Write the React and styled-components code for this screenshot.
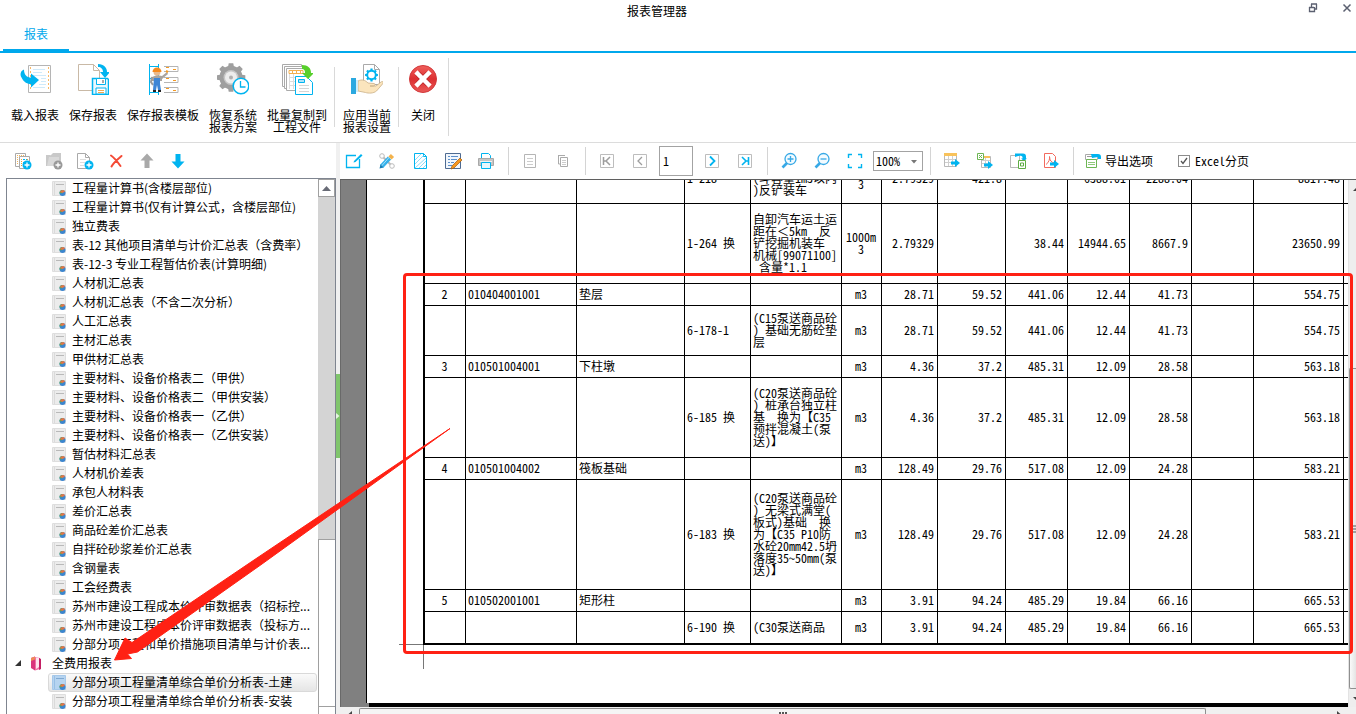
import React from "react";
import styled, { createGlobalStyle } from "styled-components";

const BLUE = "#00a8ec";
const CYAN = "#00b4f0";
const GRAY = "#a9a9a9";

const GlobalStyle = createGlobalStyle`
  *, *::before, *::after { box-sizing: border-box; }
  html, body, #root { height: 100%; margin: 0; }
  body {
    background: #fff;
    color: #000;
    font-family: "Noto Sans CJK SC", sans-serif;
    font-size: 12px;
    line-height: 12px;
    overflow: hidden;
  }
  button, input, select { font: inherit; color: inherit; }
  button { background: none; border: 0; padding: 0; margin: 0; }
  svg { display: block; flex: none; }
`;

const Window = styled.div`
  position: relative;
  display: flex;
  flex-direction: column;
  height: 100vh;
  overflow: hidden;
`;

/* ---------- title bar and tab ---------- */
const TitleBar = styled.header`
  display: flex;
  align-items: flex-start;
  height: 24px;
`;
const Title = styled.h1`
  flex: 1;
  margin: 0;
  padding: 4px 0 0 6px;
  font-size: 12px;
  font-weight: 400;
  line-height: 14px;
  text-align: center;
`;
const WindowControls = styled.div`
  display: flex;
  gap: 24px;
  padding: 3px 4px 0 0;
`;
const TabStrip = styled.nav`
  display: flex;
  height: 29px;
  padding-left: 3px;
  border-bottom: 2px solid ${BLUE};
`;
const Tab = styled.button`
  width: 66px;
  padding-bottom: 6px;
  color: ${BLUE};
  border-bottom: 2px solid ${BLUE};
`;

/* ---------- ribbon ---------- */
const Ribbon = styled.section`
  display: flex;
  flex: none;
  height: 90px;
  border-bottom: 1px solid #dcdcdc;
`;
const RibbonGroup = styled.div`
  display: flex;
  gap: 10px;
  padding: 10px ${(p) => p.$right}px 0 ${(p) => p.$left}px;
`;
const RibbonDivider = styled.div`
  width: 1px;
  margin: ${(p) => (p.$tall ? "5px 0 6px" : "14px 0 15px")};
  background: #d9d9d9;
`;
const RibbonButton = styled.button`
  display: flex;
  flex-direction: column;
  align-items: center;
  gap: 14px;
  height: 72px;
  white-space: pre;
  text-align: center;
`;

/* ---------- work area ---------- */
const WorkArea = styled.main`
  display: flex;
  flex: 1;
  min-height: 0;
`;
const Sidebar = styled.aside`
  display: flex;
  flex-direction: column;
  flex: none;
  width: 336px;
  padding-left: 6px;
`;
const SideTools = styled.div`
  display: flex;
  flex: none;
  align-items: center;
  gap: 9px;
  height: 35px;
  padding-left: 6px;
`;
const ToolButton = styled.button`
  display: flex;
  align-items: center;
  justify-content: center;
  flex: none;
  gap: 3px;
  min-width: 22px;
  height: 22px;
`;
const TreeBox = styled.div`
  display: flex;
  flex: 1;
  min-height: 0;
  border: 1px solid #7f8590;
  border-bottom: 0;
  overflow: hidden;
`;
const Tree = styled.ul`
  flex: 1;
  margin: 0;
  padding: 0;
  list-style: none;
  overflow: hidden;
`;
const TreeRow = styled.li`
  display: flex;
  align-items: center;
  gap: ${(p) => (p.$branch ? 9 : 5)}px;
  height: 19px;
  margin: 0 1px 0 ${(p) => (p.$branch ? 7 : 41)}px;
  padding: 0 0 1px ${(p) => (p.$branch ? 0 : 3)}px;
  border: 1px solid ${(p) => (p.$selected ? "#d9d9d9" : "transparent")};
  border-radius: 3px;
  background: ${(p) => (p.$selected ? "linear-gradient(#fafafa, #e5e5e5)" : "none")};
  line-height: 16px;
  white-space: nowrap;
`;
const TreeScroll = styled.div`
  display: flex;
  flex-direction: column;
  flex: none;
  width: 17px;
  background: #d4d4d4;
`;
const TreeScrollButton = styled.button`
  display: flex;
  flex: none;
  align-items: center;
  justify-content: center;
  height: 18px;
  background: #fff;
  border: 1px solid #a0a0a0;
`;
const TreeThumb = styled.div`
  height: 168px;
  margin-top: auto;
  background: #fff;
  border: 1px solid #a0a0a0;
  border-right: 0;
`;
const TreeScrollEnd = styled.div`
  height: 7px;
  background: #fff;
  border-left: 1px solid #a0a0a0;
`;
const Splitter = styled.div`
  display: flex;
  flex: none;
  align-items: center;
  width: 4px;
  padding-bottom: 25px;
  background: #f0f0f0;
`;
const SplitterHandle = styled.button`
  display: flex;
  align-items: center;
  width: 4px;
  height: 84px;
  background: #80c56c;
`;

/* ---------- report pane ---------- */
const ReportPane = styled.section`
  display: flex;
  flex-direction: column;
  flex: 1;
  min-width: 0;
`;
const ReportTools = styled.div`
  display: flex;
  flex: none;
  align-items: center;
  gap: 11px;
  height: 37px;
  padding-left: 3px;
  border-bottom: 1px solid #5f5f5f;
`;
const ToolDivider = styled.div`
  width: 1px;
  height: 28px;
  margin-right: -1px;
  background: #d4d4d4;
`;
const PageInput = styled.input`
  width: 34px;
  height: 30px;
  margin: 0 -3px;
  padding: 0 3px 2px;
  border: 1px solid #a3a3a3;
  border-radius: 0;
  background: #fff;
  outline: 0;
  font-feature-settings: "hwid";
`;
const ZoomBox = styled.label`
  position: relative;
  margin: 0 -4px;
`;
const ZoomSelect = styled.select`
  display: block;
  width: 50px;
  height: 20px;
  padding: 0 2px;
  appearance: none;
  border: 1px solid #a3a3a3;
  border-radius: 0;
  background: #fff;
  font-feature-settings: "hwid";
`;
const SelectArrow = styled.svg`
  position: absolute;
  right: 6px;
  top: 9px;
  pointer-events: none;
`;
const CheckLabel = styled.label`
  position: relative;
  display: flex;
  align-items: center;
  gap: 5px;
  margin-left: 14px;
  font-feature-settings: "hwid";
`;
const CheckBox = styled.input`
  appearance: none;
  width: 12px;
  height: 12px;
  margin: 0;
  border: 1px solid #8c8c8c;
  background: #fff;
`;
const CheckMark = styled.svg`
  position: absolute;
  left: 2px;
  pointer-events: none;
`;

const Viewer = styled.div`
  display: flex;
  flex: 1;
  min-height: 0;
`;
const Canvas = styled.div`
  display: flex;
  flex-direction: column;
  justify-content: flex-end;
  flex: 1;
  min-width: 0;
  padding-left: 25px;
  border-left: 1px solid #696969;
  background: #808080;
  overflow: hidden;
`;
const Paper = styled.div`
  flex: none;
  padding: 0 0 34px 32px;
  border-left: 1px solid #000;
  background: #fff;
`;
const PaperShadow = styled.div`
  flex: none;
  height: 4px;
  margin-left: 3px;
  background: #000;
`;
const PaperRow = styled.div`
  display: flex;
  align-items: flex-end;
`;
const SideMark = styled.div`
  flex: none;
  width: 24px;
  border-bottom: 1px solid #777;
`;
const DownMark = styled.div`
  height: 24px;
  margin-left: 24px;
  border-left: 1px solid #777;
`;
const ReportTable = styled.table`
  flex: 1;
  width: 100%;
  table-layout: fixed;
  border-spacing: 0;
  border: solid #000;
  border-width: 0 0 2px 2px;
  font-feature-settings: "hwid";
`;
const Row = styled.tr`
  height: ${(p) => p.$height}px;
`;
const Cell = styled.td`
  padding: 0 3px 2px 2px;
  border-top: 1px solid #000;
  border-left: 1px solid #000;
  text-align: ${(p) => p.$align};
  vertical-align: middle;
  white-space: pre;
  &:first-child { border-left: 0; }
`;
const WideMark = styled.span`
  font-feature-settings: normal;
`;

const VScroll = styled.div`
  display: flex;
  flex-direction: column;
  flex: none;
  width: 8px;
  background: #eeeeee;
  border-left: 1px solid #e3e3e3;
  overflow: hidden;
`;
const VThumb = styled.div`
  display: flex;
  align-items: center;
  justify-content: flex-end;
  flex: 1;
  margin-top: 170px;
  border: solid #8f8f8f;
  border-width: 1px 0 1px 1px;
  border-radius: 2px 0 0 2px;
  background: linear-gradient(90deg, #fafafa, #e4e4e4);
`;
const VScrollButton = styled.button`
  display: flex;
  align-items: center;
  justify-content: flex-end;
  flex: none;
  height: 18px;
`;
const HScroll = styled.div`
  display: flex;
  flex: none;
  height: 7px;
  padding: 1px 8px 0 0;
  background: #f0f0f0;
  overflow: hidden;
`;
const HScrollButton = styled.button`
  display: flex;
  flex: none;
  justify-content: center;
  width: 19px;
  padding-top: 3px;
`;
const HThumb = styled.div`
  display: flex;
  justify-content: center;
  flex: 1;
  padding-top: 3px;
  border: solid #8f8f8f;
  border-width: 1px 1px 0;
  border-radius: 2px 2px 0 0;
  background: #f5f5f5;
`;
const HTrack = styled.div`
  flex: none;
  width: 123px;
`;

/* ---------- annotation over the window ---------- */
const Highlight = styled.div`
  position: absolute;
  left: 403px;
  right: 3px;
  top: 273px;
  height: 381px;
  border: 3px solid #ff2114;
  border-radius: 4px;
  pointer-events: none;
`;
const Arrow = styled.svg`
  position: absolute;
  left: 110px;
  top: 420px;
  pointer-events: none;
`;

/* ---------- icons ---------- */
const Big = ({ children }) => (
  <svg width="32" height="32" viewBox="0 0 32 32" fill="none" aria-hidden="true">{children}</svg>
);
const Small = ({ children, size = 18 }) => (
  <svg width={size} height={size} viewBox="0 0 18 18" fill="none" aria-hidden="true">{children}</svg>
);

const gearPath = (cx, cy, r, R, n) => {
  const pts = [];
  for (let i = 0; i < n; i++) {
    const a = (i / n) * Math.PI * 2 - Math.PI / 2;
    const s = (Math.PI * 2) / n;
    [[-0.32, r], [-0.2, R], [0.2, R], [0.32, r]].forEach(([o, d]) =>
      pts.push(`${(cx + Math.cos(a + o * s) * d).toFixed(2)} ${(cy + Math.sin(a + o * s) * d).toFixed(2)}`)
    );
  }
  return `M${pts.join("L")}Z`;
};

const LoadIcon = () => (
  <Big>
    <path d="M9.500 2.500h22v27h-22z" fill="#fff" stroke="#b5b5b5" />
    <path d="M11.500 4v24M29.500 4v24" stroke="#f7b968" strokeDasharray="2 2" />
    <path d="M14 6.500h12M14 9.500h9M14 12.500h13M22 15.500h5M22 18.500h5M14 24.500h12M20 21.500h7" stroke="#cfeafa" />
    <path d="M5 6.500C1 8 1 12 2.500 14.500c2.500 5 6 6.500 9.500 6.500v3.500l8-7.500-8-6.500v4C8 14.500 5 12 5 6.500z" fill={CYAN} />
  </Big>
);
const SaveIcon = () => (
  <Big>
    <path d="M1.500 1.500h15l6 6v20h-21z" fill="#fff" stroke="#c9b9a6" />
    <path d="M16.500 1.500v6h6" stroke="#c9b9a6" />
    <path d="M21 1c6 0 9 4 9 8h3l-5 6-5-6h3c0-3-2-5-5-5z" fill={CYAN} />
    <path d="M15.500 15.500h15l1 1v15h-16z" fill="#e9f8ff" stroke={CYAN} strokeWidth="1.500" />
    <path d="M19.500 15.500h9v6h-9zM19 25h10v6H19z" fill="#fff" stroke={CYAN} />
    <path d="M25 17h2v3h-2z" fill={GRAY} />
    <path d="M21 27.500h6M21 29.500h6" stroke="#f3a950" />
  </Big>
);
const TemplateIcon = () => (
  <Big>
    <path d="M2.500 1v31M11.500 1v31M2 3.500h10M2 15.500h7M2 29.500h10" stroke={CYAN} />
    {[3.5, 14.5, 24.5].map((y) => (
      <g key={y}>
        <path d={`M17 ${y}h14v5h-14`} stroke="#b5b5b5" />
        <path d={`M19 ${y + 1}h3M26 ${y + 3}h3`} stroke="#f59a23" />
      </g>
    ))}
    <path d="M5 14l5-2 5 1 5-4 1 2-6 5v2H5z" fill="#a9a49f" />
    <path d="M5 14l-1 5 2 3" stroke="#9b9b9b" strokeWidth="2" />
    <circle cx="10" cy="9" r="3.500" fill="#e9b98d" />
    <path d="M5.500 9a4.500 4.500 0 0 1 9 0z" fill="#f58a1f" />
    <path d="M7 15h6v6l1 6h-3l-1-5-1 5H6z" fill="#3f86d6" />
    <path d="M6 28h3M11 28h3" stroke="#222" strokeWidth="2" />
    <path d="M19 8l2 1" stroke="#f59a23" strokeWidth="2" />
  </Big>
);
const RestoreIcon = () => (
  <Big>
    <path d={gearPath(14, 14.5, 11.5, 14.5, 8)} fill="#9f9f9f" />
    <circle cx="14" cy="14.500" r="11.500" fill="#9f9f9f" />
    <circle cx="14" cy="14.500" r="7.500" fill="#c7c7c7" />
    <circle cx="14" cy="14.500" r="6" fill="#ededed" />
    <circle cx="14" cy="14.500" r="2" fill="#b0b0b0" />
    <circle cx="24" cy="23" r="7.800" fill="#fff" stroke={CYAN} strokeWidth="1.500" />
    <path d="M23.500 18v6h5" stroke={CYAN} strokeWidth="1.300" />
  </Big>
);
const BatchIcon = () => (
  <Big>
    <path d="M1.500 1.500h19v22h-19z" fill="#fff" stroke="#aaa" />
    <path d="M3.500 3.500h19v22h-19z" fill="#fff" stroke="#aaa" />
    <path d="M5.500 5.500h19v22h-19z" fill="#fff" stroke="#aaa" />
    <path d="M8 7.500h14v3H8zM11.500 7.500v3M15.500 7.500v3M19.500 7.500v3" stroke="#f4b04f" />
    <path d="M8 14.500h7M8 18.500h6M8 22.500h6M8.500 11v15M12.500 11v15" stroke="#ddd" />
    <path d="M14.500 13.500h11l6 6v12h-17z" fill="#fff" stroke={CYAN} />
    <path d="M17.500 16.500h6v3h-6z" fill="#aee3f8" stroke={CYAN} />
    <path d="M18 22.500h10M18 25.500h10M18 28.500h10" stroke="#d5d5d5" />
    <path d="M21 2c6 0 9 3 9 8h3l-6 6-6-6h3c0-3-1-4-3-4z" fill="#57cf2c" />
  </Big>
);
const ApplyIcon = () => (
  <Big>
    <path d="M12.500 1.500h11l5 5v15h-16z" fill="#fff" stroke="#aaa" />
    <path d="M23.500 1.500v5h5" stroke="#aaa" />
    <path d={gearPath(20.5, 12, 5, 6.5, 8)} fill={CYAN} />
    <circle cx="20.500" cy="12" r="5" fill={CYAN} />
    <circle cx="20.500" cy="12" r="3.300" fill="#fff" />
    <path d="M7 18c4-2 7-1 10 2l6 .5c2 .5 1 2.500-1 2.500h-3 6l5-4c2-1 3 0 1.500 2l-6 7c-3 2.500-8 2.500-11 1.500L7 28z" fill="#fbe5bd" stroke="#c9ae86" strokeWidth=".8" />
    <path d="M0 15h5v16H0z" fill="#2ba9e0" />
    <path d="M5 17h2v12H5z" fill="#cdeefb" />
  </Big>
);
const CloseIcon = () => (
  <Big>
    <defs>
      <linearGradient id="closeFill" x1="0" y1="0" x2="0" y2="1">
        <stop offset="0" stopColor="#f0605c" />
        <stop offset=".5" stopColor="#dd2f31" />
        <stop offset="1" stopColor="#ea5a58" />
      </linearGradient>
    </defs>
    <circle cx="16" cy="16" r="13.500" fill="url(#closeFill)" stroke="#d2393b" />
    <path d="M10.500 10.500l11 11M21.500 10.500l-11 11" stroke="#b82629" strokeWidth="6" />
    <path d="M10.500 10.500l11 11M21.500 10.500l-11 11" stroke="#fff" strokeWidth="4.500" strokeLinecap="square" />
  </Big>
);

const Plus = ({ color = CYAN }) => (
  <g>
    <circle cx="13" cy="13" r="4.500" fill={color} />
    <path d="M13 10.500v5M10.500 13h5" stroke="#fff" strokeWidth="1.300" />
  </g>
);
const sideIcons = [
  ["新建报表", <><path d="M1.500 1.500h10v13h-10z" fill="#fff" stroke="#aaa" /><path d="M3.500 3v10M5 3.500h5" stroke="#f0b35a" strokeDasharray="1 1" /><path d="M5.500 4.500h10v12h-10z" fill="#fff" stroke="#aaa" /><path d="M7.500 7v8M13.500 7v3" stroke="#f0a035" strokeDasharray="1 1" /><path d="M9 7.500h4M9 10.500h3" stroke={CYAN} strokeDasharray="2 1" /><Plus /></>],
  ["新建文件夹", <><path d="M1 3h4v11H1zM3 4l3-1 2-2h8v12H3z" fill="#c9c9c9" /><path d="M4 5h10v9H2z" fill="#d9d9d9" /><Plus color="#999" /></>],
  ["新建页", <><path d="M1.500 1.500h8l4 4v11h-12z" fill="#fff" stroke="#aaa" /><path d="M9.500 1.500v4h4" stroke="#aaa" /><path d="M4 7.500h6M4 10.500h5M4 13.500h4" stroke="#ddd" /><Plus /></>],
  ["删除", <path d="M4 3.500c3 2 7 7 9.500 10.500M14.500 4C11 7 7 10 4.500 14.500" stroke="#f44a36" strokeWidth="2" strokeLinecap="round" />],
  ["上移", <path d="M9 1.500l6.500 7h-4V16h-5V8.500h-4z" fill={GRAY} />],
  ["下移", <path d="M9 16.500l6.500-7h-4V2h-5v7.500h-4z" fill={CYAN} />],
];

const editIcons = [
  ["编辑", <><path d="M11 3.500H1.500v12h13V7" stroke={CYAN} strokeWidth="1.300" /><path d="M9 9l7-7 1.500 1.500-7 6.500-2 .5z" fill={CYAN} /></>],
  ["设计", <><path d="M4 4l10 10" stroke="#bbb" strokeWidth="2" /><circle cx="4" cy="4" r="2.300" fill="#fff" stroke="#bbb" /><circle cx="14" cy="14" r="2.300" fill="#fff" stroke="#bbb" /><path d="M3.500 14.500l8-8.500" stroke="#35b1ea" strokeWidth="4.500" /><path d="M3.500 14l8-9" stroke="#a6e0fa" strokeWidth="1" /><path d="M12 6l2.500-2.500" stroke="#f3b24c" strokeWidth="4.500" /><path d="M1.500 16.500l1-4 3 3z" fill="#187db5" /></>],
  ["背景", <><path d="M3.500 1.500h9l3 3v12h-12z" fill="#fff" stroke={CYAN} /><path d="M12.500 1.500v3h3" stroke={CYAN} /><path d="M4 8l6-6M4 12l9-9M4 16L15 6M8 16l7-7M12 16l3-3" stroke="#5ecbf3" strokeWidth=".7" /></>],
  ["批注", <><path d="M1.500 1.500h15v15h-15z" fill="#f1f6fc" stroke="#4e6b92" /><path d="M4 4.500h2M4 7.500h2M4 10.500h2M7 4.500h7M7 7.500h6M7 10.500h3M4 13.500h4" stroke="#5c8fc9" /><path d="M8 14l8-8 2 2-8 8-3 1z" fill="#f8971d" stroke="#9c5a10" strokeWidth=".7" /></>],
  ["打印", <><path d="M4.500 7V1.500h7l2 2V7" fill="#fff" stroke={CYAN} /><path d="M1.500 6.500h15v7h-15z" fill="#c5c5c5" stroke="#a8a8a8" /><path d="M3 9.500h12" stroke="#f2f2f2" /><path d="M4.500 10.500h9v6h-9z" fill="#e8f7fe" stroke={CYAN} /></>],
];
const pageIcons = [
  ["单页", <><path d="M3.500 2.500h11v13h-11z" stroke="#b5b5b5" /><path d="M6 6.500h6M6 9.500h6M6 12.500h6" stroke="#ccc" /></>],
  ["多页", <><path d="M4 3.500h7M4.500 3v9h2" stroke="#aaa" /><path d="M6.500 5.500h7v9h-7z" stroke="#aaa" /><path d="M8 8.500h4M8 10.500h4M8 12.500h4" stroke="#ccc" /></>],
];
const PagerBox = <path d="M2.500 2.500h13v13h-13z" fill="#fff" stroke="#bdbdbd" />;
const prevIcons = [
  ["首页", <>{PagerBox}<path d="M5.500 5v8M12 5L8 9l4 4M6 9h2" stroke="#9d9d9d" strokeWidth="1.500" /></>],
  ["上一页", <>{PagerBox}<path d="M11 5L7 9l4 4" stroke="#9d9d9d" strokeWidth="1.300" /></>],
];
const nextIcons = [
  ["下一页", <>{PagerBox}<path d="M7 4.500L11.500 9 7 13.500" stroke={CYAN} strokeWidth="1.800" /></>],
  ["末页", <>{PagerBox}<path d="M12.500 5v8M6 5l4 4-4 4M10 9h2" stroke={CYAN} strokeWidth="1.600" /></>],
];
const zoomIcons = [
  ["放大", <><circle cx="10.500" cy="7" r="5.500" stroke="#38a9e6" strokeWidth="1.300" fill="#f3fbff" /><path d="M10.500 4v6M7.500 7h6" stroke="#38a9e6" strokeWidth="1.300" /><path d="M7 11l-4.500 4.500" stroke="#38a9e6" strokeWidth="2.600" /></>],
  ["缩小", <><circle cx="10.500" cy="7" r="5.500" stroke="#38a9e6" strokeWidth="1.300" fill="#f3fbff" /><path d="M7.500 7h6" stroke="#38a9e6" strokeWidth="1.300" /><path d="M7 11l-4.500 4.500" stroke="#38a9e6" strokeWidth="2.600" /></>],
  ["适合页面", <path d="M2.500 6V2.500H6M12 2.500h3.500V6M15.500 12v3.500H12M6 15.500H2.500V12" stroke={CYAN} strokeWidth="1.400" />],
];
const Go = ({ y = 11 }) => <path d={`M8 ${y - 1.5}h4v-2.500l5 4-5 4v-2.500H8z`} fill={CYAN} />;
const exportIcons = [
  ["导出表格", <><path d="M1.500 1.500h12v13h-12z" fill="#fff" stroke="#b9b9b9" /><path d="M1 2.500h13" stroke="#f8c25b" strokeWidth="3" /><path d="M2 7.500h11M2 10.500h11M5.500 4v10M9.500 4v10" stroke="#cfcfcf" /><Go /></>],
  ["批量导出", <><path d="M5.500 4.500h9v11h-9z" fill="#fff" stroke="#b9b9b9" /><path d="M6 8.500h8M6 11.500h8M9.500 5v10" stroke="#cfcfcf" /><path d="M6 5h8" stroke="#f8c25b" strokeWidth="2" /><path d="M1.500 1.500h6v6h-6z" fill="#fff" stroke="#6db654" /><path d="M3 3l3 3M6 3L3 6" stroke="#6db654" /><Go y={13} /></>],
  ["导出文件", <><path d="M1.500 3.500h9v12h-9z" fill="#fff" stroke="#b9b9b9" /><path d="M6 1.500h8c2 0 3 1 3 3v2h1l-3 2.500-3-2.500h1.500V5C12 3 9 4 6 5z" fill={CYAN} /><path d="M9.500 8.500h7v8h-7z" fill="#fff" stroke="#5fae45" /><path d="M11.500 11h3v3h-3z" stroke="#5fae45" /></>],
  ["导出文档", <><path d="M2.500 1.500h8l3 3v11h-11z" fill="#fff" stroke="#f26a5e" /><path d="M4 12.500c3-2 4-6 3.500-8 0 4 2 6 5 6.500" stroke="#f26a5e" /><Go y={12} /></>],
];

const TreeIcon = ({ selected }) => (
  <svg width="15" height="15" viewBox="0 0 15 15" fill="none" aria-hidden="true">
    <path d="M.5.5h13v14H.5z" fill={selected ? "#b6d4f0" : "#ececec"} stroke={selected ? "#a5c8ea" : "#dedede"} />
    <path d="M2.500 1v13" stroke={selected ? "#98bfe5" : "#dadada"} />
    <path d="M4 3.500h8" stroke={selected ? "#7fa9d2" : "#b9b9b9"} />
    <circle cx="10.500" cy="12" r="3" fill="#3c86cf" />
    <path d="M10.500 12l-3 .5a3 3 0 0 1 3-3.500z" fill="#55ad4e" />
    <path d="M7.800 11a3 3 0 0 1 5.300-.5l-2.600 1.500z" fill="#e0764a" />
  </svg>
);
const FolderIcon = () => (
  <svg width="13" height="15" viewBox="0 0 13 15" fill="none" aria-hidden="true">
    <path d="M1 2l4-1.500v14L1 12z" fill="#d9337c" />
    <path d="M5 1l5 1v11l-5 1.500z" fill="#f06fa6" />
    <path d="M6 1.500l3 .5v9l-3 2z" fill="#fde3ee" />
    <path d="M9 2l2 1v10l-2 1z" fill="#c41f64" />
    <path d="M1 2l4-1.500v3L1 5z" fill="#f08a5a" />
  </svg>
);

/* ---------- data ---------- */
const reports = [
  "工程量计算书(含楼层部位)",
  "工程量计算书(仅有计算公式，含楼层部位)",
  "独立费表",
  "表-12 其他项目清单与计价汇总表（含费率）",
  "表-12-3 专业工程暂估价表(计算明细)",
  "人材机汇总表",
  "人材机汇总表（不含二次分析）",
  "人工汇总表",
  "主材汇总表",
  "甲供材汇总表",
  "主要材料、设备价格表二（甲供）",
  "主要材料、设备价格表二（甲供安装）",
  "主要材料、设备价格表一（乙供）",
  "主要材料、设备价格表一（乙供安装）",
  "暂估材料汇总表",
  "人材机价差表",
  "承包人材料表",
  "差价汇总表",
  "商品砼差价汇总表",
  "自拌砼砂浆差价汇总表",
  "含钢量表",
  "工会经费表",
  "苏州市建设工程成本价评审数据表（招标控...",
  "苏州市建设工程成本价评审数据表（投标方...",
  "分部分项工程和单价措施项目清单与计价表...",
];
const feeReports = ["分部分项工程量清单综合单价分析表-土建", "分部分项工程量清单综合单价分析表-安装"];

const columns = [
  [40, "center"], [111, "left"], [108, "left"], [66, "left"], [91, "left"], [40, "center"],
  [56, "right"], [68, "right"], [62, "right"], [62, "right"], [62, "right"], [62, "right"], [90, "right"], [null, "left"],
];
const rows = [
  [50, "", "", "", "1-218", " \n(斗容量1m3以内\n)反铲装车", " \n3", "2.79329", "421.8", "", "6388.01", "2288.04", "", "8817.48", ""],
  [80, "", "", "", "1-264 换", "自卸汽车运土运\n距在＜5km  反\n铲挖掘机装车\n机械[99071100]\n 含量*1.1", "1000m\n3", "2.79329", "", "38.44", "14944.65", "8667.9", "", "23650.99", ""],
  [22, "2", "010404001001", "垫层", "", "", "m3", "28.71", "59.52", "441.06", "12.44", "41.73", "", "554.75", ""],
  [50, "", "", "", "6-178-1", "(C15泵送商品砼\n) 基础无筋砼垫\n层", "m3", "28.71", "59.52", "441.06", "12.44", "41.73", "", "554.75", ""],
  [22, "3", "010501004001", "下柱墩", "", "", "m3", "4.36", "37.2", "485.31", "12.09", "28.58", "", "563.18", ""],
  [80, "", "", "", "6-185 换", "(C20泵送商品砼\n) 桩承台独立柱\n基  换为【C35\n预拌混凝土(泵\n送)】", "m3", "4.36", "37.2", "485.31", "12.09", "28.58", "", "563.18", ""],
  [22, "4", "010501004002", "筏板基础", "", "", "m3", "128.49", "29.76", "517.08", "12.09", "24.28", "", "583.21", ""],
  [110, "", "", "", "6-183 换", "(C20泵送商品砼\n) 无梁式满堂(\n板式)基础  换\n为【C35 P10防\n水砼20mm42.5坍\n落度35~50mm(泵\n送)】", "m3", "128.49", "29.76", "517.08", "12.09", "24.28", "", "583.21", ""],
  [22, "5", "010502001001", "矩形柱", "", "", "m3", "3.91", "94.24", "485.29", "19.84", "66.16", "", "665.53", ""],
  [32, "", "", "", "6-190 换", "(C30泵送商品", "m3", "3.91", "94.24", "485.29", "19.84", "66.16", "", "665.53", ""],
];

/* Keeps the full-width sign at full width inside half-width figures. */
const cellText = (text) =>
  text.split("＜").flatMap((part, i) => (i ? [<WideMark key={i}>＜</WideMark>, part] : [part]));

const IconButtons = ({ icons }) =>
  icons.map(([label, art]) => (
    <ToolButton key={label} type="button" aria-label={label}>
      <Small>{art}</Small>
    </ToolButton>
  ));

export default function App() {
  return (
    <Window>
      <GlobalStyle />
      <TitleBar>
        <Title>报表管理器</Title>
        <WindowControls>
          <button type="button" aria-label="还原">
            <svg width="10" height="10" viewBox="0 0 10 10" fill="none">
              <path d="M3 1h6M3.500 1v3M8.500 1v5H7M1 4.500h5M1.500 4v4.500h5V4" stroke="#5b6070" strokeWidth="1.300" />
            </svg>
          </button>
          <button type="button" aria-label="关闭窗口">
            <svg width="10" height="10" viewBox="0 0 10 10" fill="none">
              <path d="M1.500 1.500l7 7M8.500 1.500l-7 7" stroke="#5b6070" strokeWidth="1.500" />
            </svg>
          </button>
        </WindowControls>
      </TitleBar>
      <TabStrip>
        <Tab type="button">报表</Tab>
      </TabStrip>

      <Ribbon>
        <RibbonGroup $left={11} $right={7}>
          <RibbonButton type="button"><LoadIcon />载入报表</RibbonButton>
          <RibbonButton type="button"><SaveIcon />保存报表</RibbonButton>
          <RibbonButton type="button"><TemplateIcon />保存报表模板</RibbonButton>
          <RibbonButton type="button"><RestoreIcon />{"恢复系统\n报表方案"}</RibbonButton>
          <RibbonButton type="button"><BatchIcon />{"批量复制到\n工程文件"}</RibbonButton>
        </RibbonGroup>
        <RibbonDivider />
        <RibbonGroup $left={8} $right={7}>
          <RibbonButton type="button"><ApplyIcon />{"应用当前\n报表设置"}</RibbonButton>
        </RibbonGroup>
        <RibbonDivider />
        <RibbonGroup $left={8} $right={9}>
          <RibbonButton type="button"><CloseIcon />关闭</RibbonButton>
        </RibbonGroup>
        <RibbonDivider $tall />
      </Ribbon>

      <WorkArea>
        <Sidebar>
          <SideTools><IconButtons icons={sideIcons} /></SideTools>
          <TreeBox>
            <Tree role="tree">
              {reports.map((name) => (
                <TreeRow key={name} role="treeitem"><TreeIcon />{name}</TreeRow>
              ))}
              <TreeRow $branch role="treeitem" aria-expanded="true">
                <svg width="6" height="6" viewBox="0 0 6 6"><path d="M6 0v6H0z" fill="#333" /></svg>
                <FolderIcon />全费用报表
              </TreeRow>
              {feeReports.map((name, i) => (
                <TreeRow key={name} role="treeitem" $selected={i === 0} aria-selected={i === 0}>
                  <TreeIcon selected={i === 0} />{name}
                </TreeRow>
              ))}
            </Tree>
            <TreeScroll>
              <TreeScrollButton type="button" aria-label="向上滚动">
                <svg width="9" height="5" viewBox="0 0 9 5"><path d="M4.500 0L9 5H0z" fill="#686b76" /></svg>
              </TreeScrollButton>
              <TreeThumb />
              <TreeScrollEnd />
            </TreeScroll>
          </TreeBox>
        </Sidebar>
        <Splitter>
          <SplitterHandle type="button" aria-label="收起侧栏">
            <svg width="4" height="8" viewBox="0 0 4 8"><path d="M0 1l3.500 3L0 7z" fill="#e6f5e1" /></svg>
          </SplitterHandle>
        </Splitter>

        <ReportPane>
          <ReportTools>
            <IconButtons icons={editIcons} />
            <ToolDivider />
            <IconButtons icons={pageIcons} />
            <ToolDivider />
            <IconButtons icons={prevIcons} />
            <PageInput aria-label="页码" defaultValue="1" />
            <IconButtons icons={nextIcons} />
            <ToolDivider />
            <IconButtons icons={zoomIcons} />
            <ZoomBox>
              <ZoomSelect aria-label="缩放比例" defaultValue="100%"><option>100%</option></ZoomSelect>
              <SelectArrow width="6" height="4" viewBox="0 0 6 4"><path d="M0 0h6L3 3.500z" fill="#777" /></SelectArrow>
            </ZoomBox>
            <ToolDivider />
            <IconButtons icons={exportIcons} />
            <ToolDivider />
            <ToolButton type="button">
              <Small>
                <path d="M1.500 2.500h12v5h-12z" fill="#fff" stroke="#aaa" />
                <path d="M3 4.500h5" stroke="#999" />
                <path d="M7 2h7c2 0 3 1 3 3v2h-3V5L8 6z" fill={CYAN} />
                <path d="M2.500 7.500h10v8h-10z" fill="#fff" stroke="#6db654" />
                <path d="M4 10.500h7M4 12.500h7" stroke="#8fc97b" />
              </Small>
              导出选项
            </ToolButton>
            <CheckLabel>
              <CheckBox type="checkbox" defaultChecked />
              <CheckMark width="8" height="8" viewBox="0 0 8 8" fill="none">
                <path d="M1 4l2 2.500L7 1" stroke="#555" strokeWidth="1.300" />
              </CheckMark>
              Excel分页
            </CheckLabel>
          </ReportTools>

          <Viewer>
            <Canvas>
              <Paper>
                <PaperRow>
                  <SideMark />
                  <ReportTable>
                    <colgroup>
                      {columns.map(([w], i) => <col key={i} width={w ?? undefined} />)}
                    </colgroup>
                    <tbody>
                      {rows.map(([height, ...cells], r) => (
                        <Row key={r} $height={height}>
                          {cells.map((text, c) => (
                            <Cell key={c} $align={columns[c][1]}>{cellText(text)}</Cell>
                          ))}
                        </Row>
                      ))}
                    </tbody>
                  </ReportTable>
                </PaperRow>
                <DownMark />
              </Paper>
              <PaperShadow />
            </Canvas>
            <VScroll>
              <VScrollButton type="button" aria-label="上滚">
                <svg width="3" height="3" viewBox="0 0 3 3"><path d="M3 0v3H0z" fill="#444" /></svg>
              </VScrollButton>
              <VThumb>
                <svg width="3" height="8" viewBox="0 0 3 8"><path d="M0 1h3M0 4h3M0 7h3" stroke="#555" /></svg>
              </VThumb>
              <VScrollButton type="button" aria-label="下滚">
                <svg width="3" height="3" viewBox="0 0 3 3"><path d="M0 0h3v3z" fill="#444" /></svg>
              </VScrollButton>
            </VScroll>
          </Viewer>
          <HScroll>
            <HScrollButton type="button" aria-label="左滚">
              <svg width="4" height="7" viewBox="0 0 4 7"><path d="M4 0v7L0 3.500z" fill="#444" /></svg>
            </HScrollButton>
            <HThumb>
              <svg width="8" height="3" viewBox="0 0 8 3"><path d="M1 0v3M4 0v3M7 0v3" stroke="#555" strokeWidth="2" /></svg>
            </HThumb>
            <HTrack />
            <HScrollButton type="button" aria-label="右滚">
              <svg width="4" height="7" viewBox="0 0 4 7"><path d="M0 0v7l4-3.500z" fill="#444" /></svg>
            </HScrollButton>
          </HScroll>
        </ReportPane>
      </WorkArea>

      <Highlight />
      <Arrow width="344" height="244" viewBox="110 420 344 244">
        <path d="M450 428.500L254 560 132 642.500l-7-4.500-10.500 22 17-1.500-4-4.500 10-2L262 564z" fill="#ff2114" stroke="#ff2114" strokeLinejoin="round" />
      </Arrow>
    </Window>
  );
}
